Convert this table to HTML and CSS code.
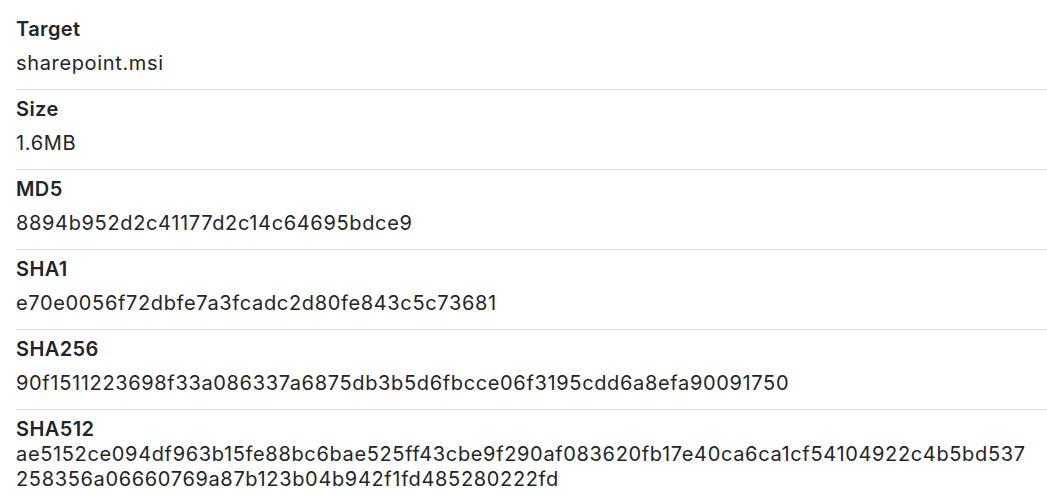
FILE: index.html
```html
<!DOCTYPE html>
<html>
<head>
<meta charset="utf-8">
<link rel="stylesheet" href="styles.css">
</head>
<body>
<div class="list">
  <div class="row">
    <div class="label">Target</div>
    <div class="value">sharepoint.msi</div>
  </div>
  <div class="row">
    <div class="label">Size</div>
    <div class="value">1.6MB</div>
  </div>
  <div class="row">
    <div class="label">MD5</div>
    <div class="value">8894b952d2c41177d2c14c64695bdce9</div>
  </div>
  <div class="row">
    <div class="label">SHA1</div>
    <div class="value">e70e0056f72dbfe7a3fcadc2d80fe843c5c73681</div>
  </div>
  <div class="row">
    <div class="label">SHA256</div>
    <div class="value">90f1511223698f33a086337a6875db3b5d6fbcce06f3195cdd6a8efa90091750</div>
  </div>
  <div class="row row-last">
    <div class="label">SHA512</div>
    <div class="value value-wrap">ae5152ce094df963b15fe88bc6bae525ff43cbe9f290af083620fb17e40ca6ca1cf54104922c4b5bd537258356a06660769a87b123b04b942f1fd485280222fd</div>
  </div>
</div>
</body>
</html>
```

FILE: styles.css
```css
html, body {
  margin: 0;
  padding: 0;
  background: #ffffff;
}
body {
  font-family: Inter, "Noto Sans", sans-serif;
  color: #212529;
  font-size: 20px;
  line-height: 25px;
}
.list {
  padding: 10px 0 0 16px;
}
.row {
  display: flex;
  flex-direction: column;
  gap: 9px;
  padding: 7px 16px 13px 0;
  border-bottom: 1px solid #dee2e6;
}
.label {
  font-weight: 600;
  letter-spacing: 0.4px;
}
.value {
  font-weight: 400;
  letter-spacing: 0.65px;
}
.row-last {
  gap: 0;
  border-bottom: none;
  padding-bottom: 0;
}
.value-wrap {
  word-break: break-all;
}
```
